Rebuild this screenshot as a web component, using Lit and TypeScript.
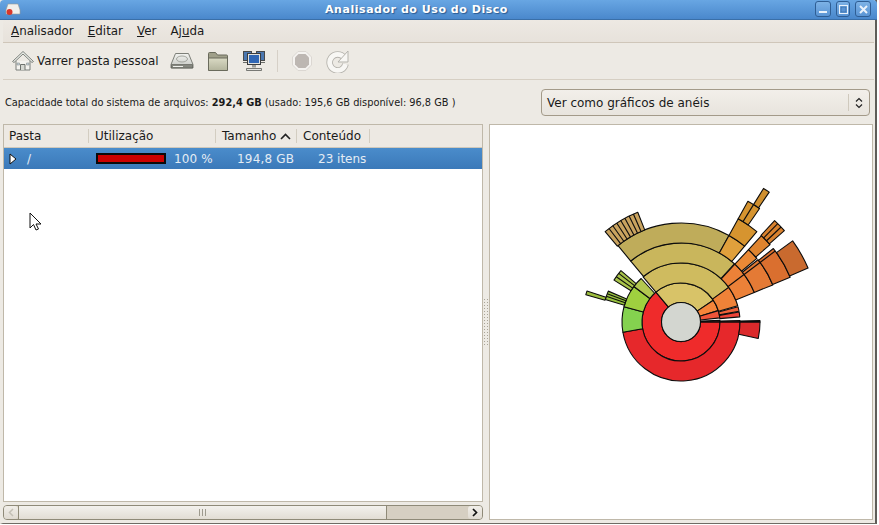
import { LitElement, html, css, svg } from "lit";
import { customElement } from "lit/decorators.js";

const CX = 681, CY = 322;
const R = [19.5, 39, 59, 79, 99, 118, 138, 157];
type S = [number, number, number, string]; // ring, from, to, colour

const sectors: S[] = [
  // ring 0
  [0, 130, 360, "#ef2b2b"],
  [0, 34, 130, "#d8c368"],
  [0, 17, 34, "#f5853a"],
  [0, 6, 17, "#f0553a"],
  [0, 0, 2.5, "#3a1a1a"],
  // ring 1
  [1, 190, 360, "#e6282b"],
  [1, 165, 190, "#84d24f"],
  [1, 143, 165, "#9fd03f"],
  [1, 132.5, 143, "#b3c850"],
  [1, 36, 130, "#cfbb5f"],
  [1, 16, 36, "#ef8238"],
  [1, 10.5, 15, "#f0623a"],
  [1, 5, 9.8, "#ee4438"],
  [1, 0, 1.5, "#4a1e1e"],
  // ring 2
  [2, 47.5, 129.5, "#c9b65c"],
  [2, 22, 47, "#ec8138"],
  [2, -12, 0, "#db2a2c"],
  [2, 0, 1, "#4a1e1e"],
  [2, 139.5, 148, "#a9c44a"],
  [2, 157, 163.5, "#98c23e"],
  // ring 3
  [3, 61, 129.5, "#bfac5a"],
  [3, 50, 61, "#e0a03c"],
  [3, 40, 47, "#ea8936"],
  [3, 22, 39, "#e47a35"],
  [3, 161.8, 164, "#9cbd3e"],
  // ring 4
  [4, 111.5, 130, "#c9a35f"],
  [4, 50, 61, "#d6942f"],
  [4, 41, 47, "#df842f"],
  [4, 22.3, 38.5, "#da6f2f"],
  // ring 5
  [5, 55.3, 61, "#d6942f"],
  [5, 41.5, 47.3, "#d9822f"],
  [5, 23, 36, "#c96a2f"],
  // ring 6
  [6, 55.8, 58.3, "#cf8f2f"],
];

const radial: [number, number, number][] = [
  [113.8, 4, 5], [116.1, 4, 5], [118.4, 4, 5], [120.7, 4, 5],
  [123, 4, 5], [125.3, 4, 5], [127.6, 4, 5],
  [58.3, 5, 6], [45.5, 5, 6], [43.5, 5, 6],
  [142, 2, 3], [145, 2, 3], [159, 2, 3], [161, 2, 3],
  [37, 2, 5],
];

function pt(r: number, a: number) {
  const t = (a * Math.PI) / 180;
  return `${(CX + r * Math.cos(t)).toFixed(2)} ${(CY - r * Math.sin(t)).toFixed(2)}`;
}
function sector(ring: number, a0: number, a1: number) {
  const r0 = R[ring], r1 = R[ring + 1];
  const large = a1 - a0 > 180 ? 1 : 0;
  return `M${pt(r0, a0)}L${pt(r1, a0)}A${r1} ${r1} 0 ${large} 0 ${pt(r1, a1)}L${pt(r0, a1)}A${r0} ${r0} 0 ${large} 1 ${pt(r0, a0)}Z`;
}

const home = html`<svg class="ico" width="24" height="24" viewBox="0 0 24 24">
  <path d="M5 12v9h14v-9" fill="#f4f3ef" stroke="#7b7f7a"/>
  <path d="M1.500 12.500 12 2.500l10.500 10-1.500 1L12 5 3 13.500Z" fill="#eceeea" stroke="#7d827c"/>
  <path d="M9.500 21v-5.500h4.500V21" fill="#d6d8d2" stroke="#6e726d"/>
  <path d="M6 14h2.500v2H6zM15.500 14H18v2h-2.500z" fill="#c5d2df" stroke="#8b908b" stroke-width=".6"/>
</svg>`;
const drive = html`<svg class="ico" width="24" height="24" viewBox="0 0 24 24">
  <defs><linearGradient id="dg" x1="0" y1="0" x2="0" y2="1"><stop offset="0" stop-color="#f2f3f0"/><stop offset="1" stop-color="#c4c6c1"/></linearGradient></defs>
  <path d="M5.500 4.500h13l4.500 11v3.500H1v-3.500Z" fill="url(#dg)" stroke="#7d7f78"/>
  <path d="M1.500 15.500h21v3.500h-21z" fill="#85877f" stroke="#55574f" stroke-width=".6"/>
  <ellipse cx="12" cy="10" rx="5.500" ry="3" fill="none" stroke="#a4a69f"/>
  <path d="M3 17.500h10" stroke="#f0f1ed"/>
</svg>`;
const folder = html`<svg class="ico" width="24" height="24" viewBox="0 0 24 24">
  <defs><linearGradient id="fg" x1="0" y1="0" x2="0" y2="1"><stop offset="0" stop-color="#dadac4"/><stop offset="1" stop-color="#b3b49c"/></linearGradient></defs>
  <path d="M2.500 21V4.500a1 1 0 0 1 1-1h6l2 2.500h9a1 1 0 0 1 1 1V21Z" fill="#a0a08a" stroke="#6a6b5c"/>
  <path d="M2.500 21.500V9h19v12.500Z" fill="url(#fg)" stroke="#6a6b5c"/>
</svg>`;
const net = html`<svg class="ico" width="24" height="24" viewBox="0 0 24 24">
  <rect x="1.500" y="2.500" width="8" height="9" fill="#4a77b0" stroke="#47494a"/>
  <rect x="14.500" y="2.500" width="8" height="9" fill="#4a77b0" stroke="#47494a"/>
  <rect x="5.500" y="4.500" width="13" height="11" fill="#e0e1dd" stroke="#3a3c3e"/>
  <rect x="7" y="6" width="10" height="8" fill="#2f66b4"/>
  <path d="M10 16h4v2.500h-4z" fill="#9a9c98"/>
  <path d="M4.500 19.500h15v2h-15z" fill="#e3e4e0" stroke="#5b5d59" stroke-width=".8"/>
  <path d="M1 13.500h4M19 13.500h4" stroke="#6b6d69"/>
</svg>`;
const stop = html`<svg class="ico" width="24" height="24" viewBox="0 0 24 24">
  <path d="M8 2.500h8l5.500 5.500v8L16 21.500H8L2.500 16V8Z" fill="#f5f3f0" stroke="#dbd7d2"/>
  <path d="M8.500 5h7L19 8.500v7L15.500 19h-7L5 15.500v-7Z" fill="#bdb7b2"/>
</svg>`;
const redo = html`<svg class="ico" width="24" height="24" viewBox="0 0 24 24">
  <path d="M18 8.500A8 8 0 1 0 19.500 15" fill="none" stroke="#b5b3ad" stroke-width="6.500"/>
  <path d="M18 8.500A8 8 0 1 0 19.500 15" fill="none" stroke="#f8f7f4" stroke-width="4.800"/>
  <path d="M22 2v11h-10Z" fill="#f8f7f4" stroke="#b5b3ad"/>
</svg>`;

@customElement("app-root")
export class AppRoot extends LitElement {
  static styles = css`
    :host { display: block; width: 879px; height: 525px; overflow: hidden; background: #fff;
      font-family: "DejaVu Sans", sans-serif; color: #1a1a1a; font-size: 12px; }
    .win { width: 877px; height: 524px; display: flex; flex-direction: column; box-sizing: border-box; background: #edeae4;
      border-right: 2px solid #5f5d58; border-left: 3px solid #edeae4; border-bottom: 1px solid #6f6c65; position: relative; }
    .title { margin: 0 -2px 0 -3px; height: 19px; flex: none; display: flex; align-items: center; padding-right: 44px;
      justify-content: center; position: relative; background: linear-gradient(#68a6e3, #4a88cc);
      border-bottom: 1px solid #3a6fa8; border-radius: 4px 4px 0 0; color: #fff; font-weight: bold; font-size: 11px;
      letter-spacing: .54px; text-shadow: 1px 1px 1px #2a5a90; }
    .appico { position: absolute; left: 5px; top: 3px; }
    .wbtns { position: absolute; right: 6px; top: 1px; display: flex; gap: 5px; }
    .wb { width: 16px; height: 16px; box-sizing: border-box; border: 1px solid #2f5e94; border-radius: 3px;
      background: linear-gradient(#7db2e6, #5a94d4); display: flex; align-items: center; justify-content: center; }
    .wb.mid { width: 14px; }
    .menu { height: 22px; flex: none; display: flex; align-items: center; gap: 14px; padding-left: 8px; margin-right: 1px;
      background: linear-gradient(#ede9e3, #e7e2db); border-bottom: 1px solid #cfc6b9; font-size: 11.9px; }
    .menu u { text-underline-offset: 1px; }
    .tools { height: 37px; flex: none; display: flex; align-items: center; padding-left: 8px; margin-right: 1px;
      border-bottom: 1px solid #d6cfc3; box-sizing: border-box; font-size: 11.88px; }
    .home { display: flex; align-items: center; gap: 2px; margin-right: 11px; }
    .ico { flex: none; display: block; }
    .tb { width: 24px; height: 24px; margin-right: 12px; }
    .sep { width: 1px; height: 22px; background: #d6d0c7; margin: 0 12px 0 -1px; }
    .info { height: 45px; flex: none; display: flex; align-items: center; justify-content: space-between;
      padding: 0 5px 0 2px; font-size: 9.8px; box-sizing: border-box; }
    .combo { width: 329px; height: 27px; box-sizing: border-box; border: 1px solid #a39a89; border-radius: 4px;
      background: linear-gradient(#f2efea, #e8e4dd); display: flex; align-items: center; font-size: 12px; padding-left: 5px; }
    .combo span { flex: 1; }
    .combo .cs { width: 20px; height: 17px; border-left: 1px solid #cfc9bd; display: flex; align-items: center; justify-content: center; flex: none; }
    .main { flex: 1; display: flex; min-height: 0; margin-top: -1px; padding-bottom: 3px; }
    .left { width: 480px; flex: none; display: flex; flex-direction: column; }
    .frame { flex: 1; display: flex; flex-direction: column; border: 1px solid #bfb8a9; box-sizing: border-box; background: #fff; min-height: 0; }
    .head { height: 23px; flex: none; display: flex; background: #ede9e3; border-bottom: 1px solid #cfc8bb; box-sizing: border-box; }
    .hc { display: flex; align-items: center; padding-left: 6px; box-sizing: border-box; position: relative; }
    .hc.first { padding-left: 5px; }
    .hc.c1 { width: 85px; }
    .hc.c2 { width: 127px; }
    .hc.c3 { width: 81px; }
    .hc.c4 { width: 73px; }
    .hc::after { content: ""; position: absolute; right: 0; top: 4px; bottom: 4px; width: 1px; background: #d3cdc1; }
    .row { height: 21px; flex: none; background: linear-gradient(#4a8ccb, #3b79b9); color: #e4ecf4; display: flex; align-items: center; position: relative; }
    .tri { width: 23px; flex: none; padding-left: 5px; box-sizing: border-box; display: flex; }
    .slash { width: 69px; flex: none; }
    .bar { width: 70px; height: 11px; box-sizing: border-box; border: 2px solid #0a0a0a; background: #cc0000; flex: none; margin-right: 8px; }
    .pct { width: 63px; flex: none; letter-spacing: .15px; }
    .sz { width: 81px; flex: none; letter-spacing: .2px; }
    .body { flex: 1; background: #fff; position: relative; }
    .cursor { position: absolute; left: 25px; top: 43px; }
    .hs { height: 15px; flex: none; display: flex; margin: 3px 0 0; border: 1px solid #8f8a78; border-radius: 4px; box-sizing: border-box; background: #d6cfc2; }
    .arrow { width: 14px; flex: none; background: linear-gradient(#f1eee9, #e0dbd2); display: flex; align-items: center; justify-content: center; border-radius: 3px; }
    .thumb { width: 367px; flex: none; border-left: 1px solid #8f8a78; border-right: 1px solid #8f8a78; background: linear-gradient(#f3f1ed, #e2ddd4);
      display: flex; align-items: center; justify-content: center; gap: 2px; }
    .thumb i { width: 1px; height: 7px; background: #9e9a8e; }
    .track { flex: 1; }
    .split { width: 6px; flex: none; display: flex; align-items: center; justify-content: center; }
    .dots { width: 6px; height: 48px; background-image: radial-gradient(#a9a497 .8px, transparent 1px); background-size: 3px 3px; }
    .right { width: 384px; flex: none; border: 1px solid #bfb8a9; box-sizing: border-box; background: #fff; overflow: hidden; position: relative; }
    .right svg { position: absolute; left: -490px; top: -125px; }
  `;

  render() {
    return html`<div class="win">
      <div class="title">
        <svg class="appico" width="16" height="13" viewBox="0 0 16 13">
          <path d="M3 1h10l2 6v4H1V7Z" fill="#f1efeb" stroke="#9a9a96" stroke-width=".6"/>
          <circle cx="4.500" cy="9" r="3" fill="#d8372b"/>
        </svg>
        Analisador do Uso do Disco
        <div class="wbtns">
          <div class="wb"><svg width="10" height="9" viewBox="0 0 10 9"><rect x="1" y="6" width="8" height="2" fill="#eaf2fb"/></svg></div>
          <div class="wb mid"><svg width="9" height="9" viewBox="0 0 9 9"><rect x=".5" y=".5" width="8" height="8" fill="none" stroke="#eaf2fb"/><rect x="2" y="2" width="5" height="5" fill="#5a94d4" stroke="#2f5e94" stroke-width=".5"/></svg></div>
          <div class="wb"><svg width="9" height="9" viewBox="0 0 9 9"><path d="M1 1l7 7M8 1L1 8" stroke="#eaf2fb" stroke-width="2"/></svg></div>
        </div>
      </div>
      <div class="menu">
        <span><u>A</u>nalisador</span><span><u>E</u>ditar</span><span><u>V</u>er</span><span>Aj<u>u</u>da</span>
      </div>
      <div class="tools">
        <div class="home">${home}<span>Varrer pasta pessoal</span></div>
        <div class="tb">${drive}</div>
        <div class="tb">${folder}</div>
        <div class="tb">${net}</div>
        <div class="sep"></div>
        <div class="tb">${stop}</div>
        <div class="tb">${redo}</div>
      </div>
      <div class="info">
        <div>Capacidade total do sistema de arquivos: <b>292,4 GB</b> (usado: 195,6 GB disponível: 96,8 GB )</div>
        <div class="combo"><span>Ver como gráficos de anéis</span>
          <div class="cs"><svg width="8" height="12" viewBox="0 0 8 12"><path d="M1 4.500 4 1.500l3 3M1 7.500l3 3 3-3" fill="none" stroke="#222" stroke-width="1.200"/></svg></div>
        </div>
      </div>
      <div class="main">
        <div class="left">
          <div class="frame">
            <div class="head">
              <div class="hc first c1">Pasta</div>
              <div class="hc c2">Utilização</div>
              <div class="hc c3">Tamanho&nbsp;<svg width="11" height="7" viewBox="0 0 11 7"><path d="M1 6l4.500-4.500L10 6" fill="none" stroke="#222" stroke-width="1.600"/></svg></div>
              <div class="hc c4">Conteúdo</div>
            </div>
            <div class="row">
              <div class="tri"><svg width="8" height="12" viewBox="0 0 8 12"><path d="M1 1l6 5-6 5Z" fill="#fff" stroke="#111"/></svg></div>
              <div class="slash">/</div>
              <div class="bar"></div>
              <div class="pct">100 %</div>
              <div class="sz">194,8 GB</div>
              <div>23 itens</div>
            </div>
            <div class="body">
              <svg class="cursor" width="14" height="20" viewBox="0 0 14 20"><path d="M1 1v15l3.500-3.500L7 18l2.500-1-2.500-5h5Z" fill="#fff" stroke="#111"/></svg>
            </div>
          </div>
          <div class="hs">
            <div class="arrow"><svg width="6" height="9" viewBox="0 0 6 9"><path d="M5 1 1.500 4.500 5 8" fill="none" stroke="#c4c0b6" stroke-width="1.500"/></svg></div>
            <div class="thumb"><i></i><i></i><i></i></div>
            <div class="track"></div>
            <div class="arrow"><svg width="6" height="9" viewBox="0 0 6 9"><path d="M1 1l3.500 3.500L1 8" fill="none" stroke="#111" stroke-width="1.700"/></svg></div>
          </div>
        </div>
        <div class="split"><div class="dots"></div></div>
        <div class="right">
          <svg width="879" height="525" viewBox="0 0 879 525">
            ${sectors.map(([r, a, b, c]) => svg`<path d=${sector(r, a, b)} fill=${c} stroke="#0c0c0c" stroke-width="1.100" stroke-linejoin="round"/>`)}
            ${radial.map(([a, r0, r1]) => svg`<path d=${`M${pt(R[r0], a)}L${pt(R[r1], a)}`} stroke="#0c0c0c" stroke-width="1.100"/>`)}
            <circle cx=${CX} cy=${CY} r="19.500" fill="#d3d6d0" stroke="#0c0c0c" stroke-width="1.100"/>
          </svg>
        </div>
      </div>
    </div>`;
  }
}
